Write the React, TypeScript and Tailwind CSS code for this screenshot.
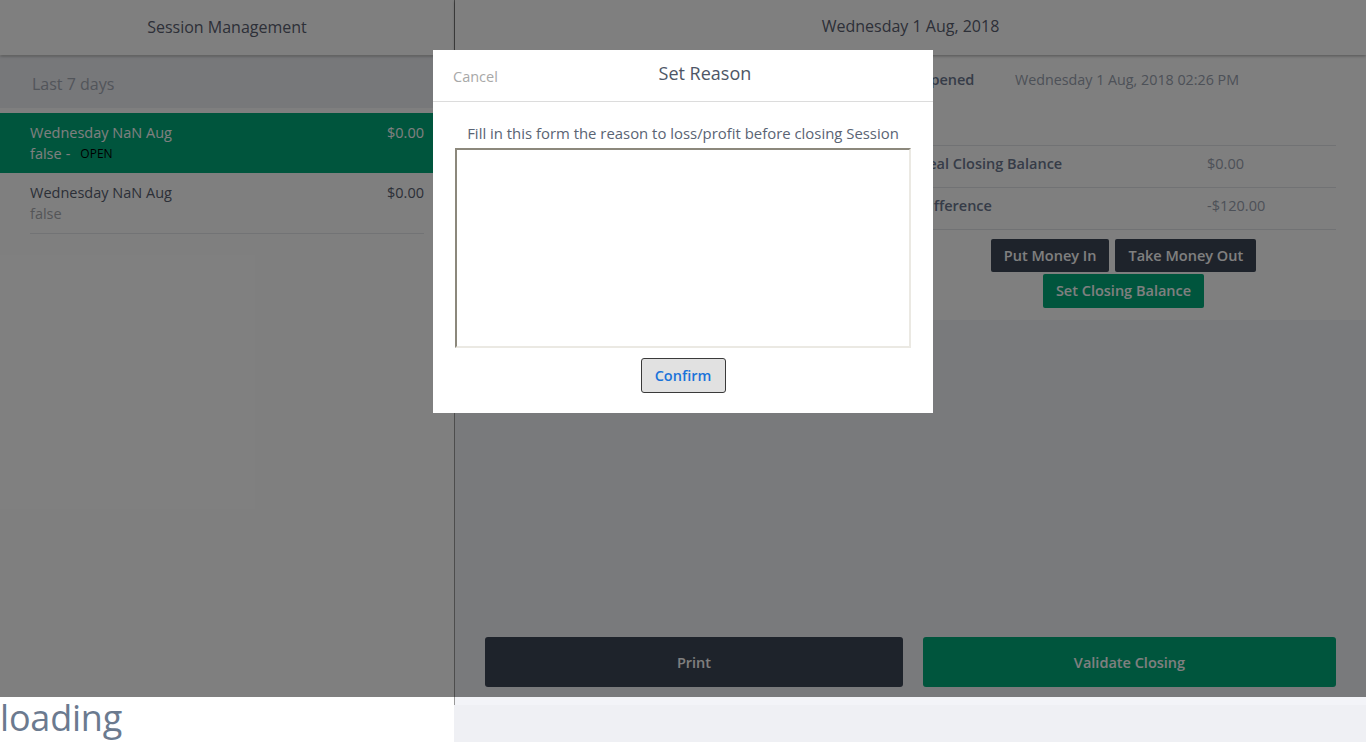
import React from "react";

const sessions = [
  { title: "Wednesday NaN Aug", sub: "false", amount: "$0.00", open: true },
  { title: "Wednesday NaN Aug", sub: "false", amount: "$0.00", open: false },
];

export default function App() {
  return (
    <div className="relative h-[742px] w-[1366px] overflow-hidden bg-white font-['Open_Sans',sans-serif]">
      <div className="flex h-full">
        {/* Left column */}
        <div className="flex w-[454px] flex-col">
          <div className="flex h-[697px] flex-col bg-white">
            <div className="relative z-10 flex h-[55px] items-center justify-center bg-white pb-px shadow-[0_1px_3px_rgba(0,0,0,0.35)]">
              <span className="text-[16px] text-[#5a6070]">Session Management</span>
            </div>
            <div className="mt-px flex h-[52px] items-center bg-[#eff0f4] px-[32px] pt-[4px]">
              <span className="text-[16px] text-[#a4aab4]">Last 7 days</span>
            </div>
            <div className="mt-[5px]">
              {sessions.map((s, i) => (
                <div key={i} className={s.open ? "bg-[#00aa7a] px-[30px]" : "px-[30px]"}>
                  <div
                    className={
                      s.open
                        ? "flex h-[60px] justify-between pt-[9px] text-[14.5px] leading-[21px]"
                        : "flex h-[61px] justify-between border-b border-[#e4e6ea] pt-[9px] text-[14.5px] leading-[21px]"
                    }
                  >
                    <div>
                      <div className={s.open ? "text-white" : "text-[#58606f]"}>{s.title}</div>
                      <div className={s.open ? "flex items-center text-white" : "text-[#a8abb0]"}>
                        {s.sub}
                        {s.open && (
                          <>
                            <span className="ml-[4px]">-</span>
                            <span className="ml-[10px] text-[12px] text-black">OPEN</span>
                          </>
                        )}
                      </div>
                    </div>
                    <div className={s.open ? "text-white" : "text-[#58606f]"}>{s.amount}</div>
                  </div>
                </div>
              ))}
            </div>
          </div>
          <div className="flex-1 bg-white">
            <span className="block text-[36px] font-normal leading-[42px] tracking-[-0.2px] text-[#6b7a8f]">loading</span>
          </div>
        </div>

        {/* Right column */}
        <div className="flex flex-1 flex-col bg-[#eff0f4]">
          <div className="flex h-[705px] flex-col border-l border-[#9a9a9a] bg-[#f3f4f8]">
            <div className="relative z-10 flex h-[55px] items-center justify-center bg-white pb-[3px] shadow-[0_1px_3px_rgba(0,0,0,0.35)]">
              <span className="text-[16px] text-[#5a6070]">Wednesday 1 Aug, 2018</span>
            </div>
            <div className="flex bg-white px-[30px] pb-[12px]">
              <div className="w-[426px] pr-[20px]">
                <div className="h-[91px] border-b border-[#e2e4e8] pt-[15px] text-[14px] leading-[20px]">
                  <div className="flex px-2">
                    <span className="w-[120px] font-semibold text-[#6c7890]">Opening Balance</span>
                    <span className="text-[#9aa2b0]">$120.00</span>
                  </div>
                </div>
                <div className="flex h-[42px] border-b border-[#e2e4e8] px-2 pt-[8px] text-[14px] leading-[20px]">
                  <span className="w-[288px] font-semibold text-[#6c7890]">Expected Closing Balance</span>
                  <span className="text-[#9aa2b0]">$120.00</span>
                </div>
              </div>
              <div className="flex-1">
                <div className="h-[91px] border-b border-[#e2e4e8] pt-[15px] text-[14px] leading-[20px]">
                  <div className="flex px-2">
                    <span className="w-[96px] text-[14.5px] font-semibold text-[#6c7890]">Opened</span>
                    <span className="text-[14.3px] text-[#9aa2b0]">Wednesday 1 Aug, 2018 02:26 PM</span>
                  </div>
                </div>
                <div className="flex h-[42px] border-b border-[#e2e4e8] px-2 pt-[8px] text-[14.5px] leading-[20px]">
                  <span className="w-[288px] font-semibold text-[#6c7890]">Real Closing Balance</span>
                  <span className="text-[#9aa2b0]">$0.00</span>
                </div>
                <div className="flex h-[42px] border-b border-[#e2e4e8] px-2 pt-[8px] text-[14.5px] leading-[20px]">
                  <span className="w-[288px] font-semibold text-[#6c7890]">Difference</span>
                  <span className="text-[#9aa2b0]">-$120.00</span>
                </div>
                <div className="mt-[9px] flex flex-col items-center gap-[2px]">
                  <div className="flex gap-[6px]">
                    <button className="h-[33px] rounded-[2px] bg-[#3c4656] px-[13px] pt-px text-[14.5px] font-semibold text-white">
                      Put Money In
                    </button>
                    <button className="h-[33px] rounded-[2px] bg-[#3c4656] px-[13px] pt-px text-[14.5px] font-semibold text-white">
                      Take Money Out
                    </button>
                  </div>
                  <button className="h-[34px] rounded-[2px] bg-[#00aa7a] px-[13px] text-[14.5px] font-semibold text-white">
                    Set Closing Balance
                  </button>
                </div>
              </div>
            </div>
            <div className="flex-1" />
            <div className="flex gap-[20px] px-[30px] pb-[18px]">
              <button className="h-[50px] w-[418px] rounded-[3px] bg-[#3c4656] pt-px text-[14.5px] font-semibold text-white">
                Print
              </button>
              <button className="h-[50px] flex-1 rounded-[3px] bg-[#00aa7a] pt-px text-[14.5px] font-semibold text-white">
                Validate Closing
              </button>
            </div>
          </div>
        </div>
      </div>

      {/* Backdrop */}
      <div className="absolute left-0 top-0 z-20 h-[697px] w-full bg-black/50" />

      {/* Modal */}
      <div className="absolute left-[433px] top-[50px] z-30 w-[500px] bg-white">
        <div className="flex h-[52px] border-b border-[#dcdcdc]">
          <span className="ml-[20px] pt-[17px] text-[14.5px] leading-[20px] text-[#a8a8a8]">Cancel</span>
          <span className="flex-1 pr-[21px] pt-[11px] text-center text-[18px] leading-[24px] text-[#4e5666]">
            Set Reason
          </span>
        </div>
        <div className="flex flex-col items-center px-[22px] pb-[20px] pt-[21px]">
          <p className="text-[14.9px] leading-[20px] text-[#5a6474]">
            Fill in this form the reason to loss/profit before closing Session
          </p>
          <textarea className="mt-[5px] h-[200px] w-full resize-none border-2 border-b-[#ebe9e3] border-l-[#8c887c] border-r-[#ebe9e3] border-t-[#8c887c] outline-none" />
          <button className="mt-[10px] h-[35px] w-[85px] rounded-[3px] border border-[#3a3a3a] bg-[#e1e1e1] pt-px text-[14.5px] font-semibold text-[#1a73d9]">
            Confirm
          </button>
        </div>
      </div>
    </div>
  );
}
